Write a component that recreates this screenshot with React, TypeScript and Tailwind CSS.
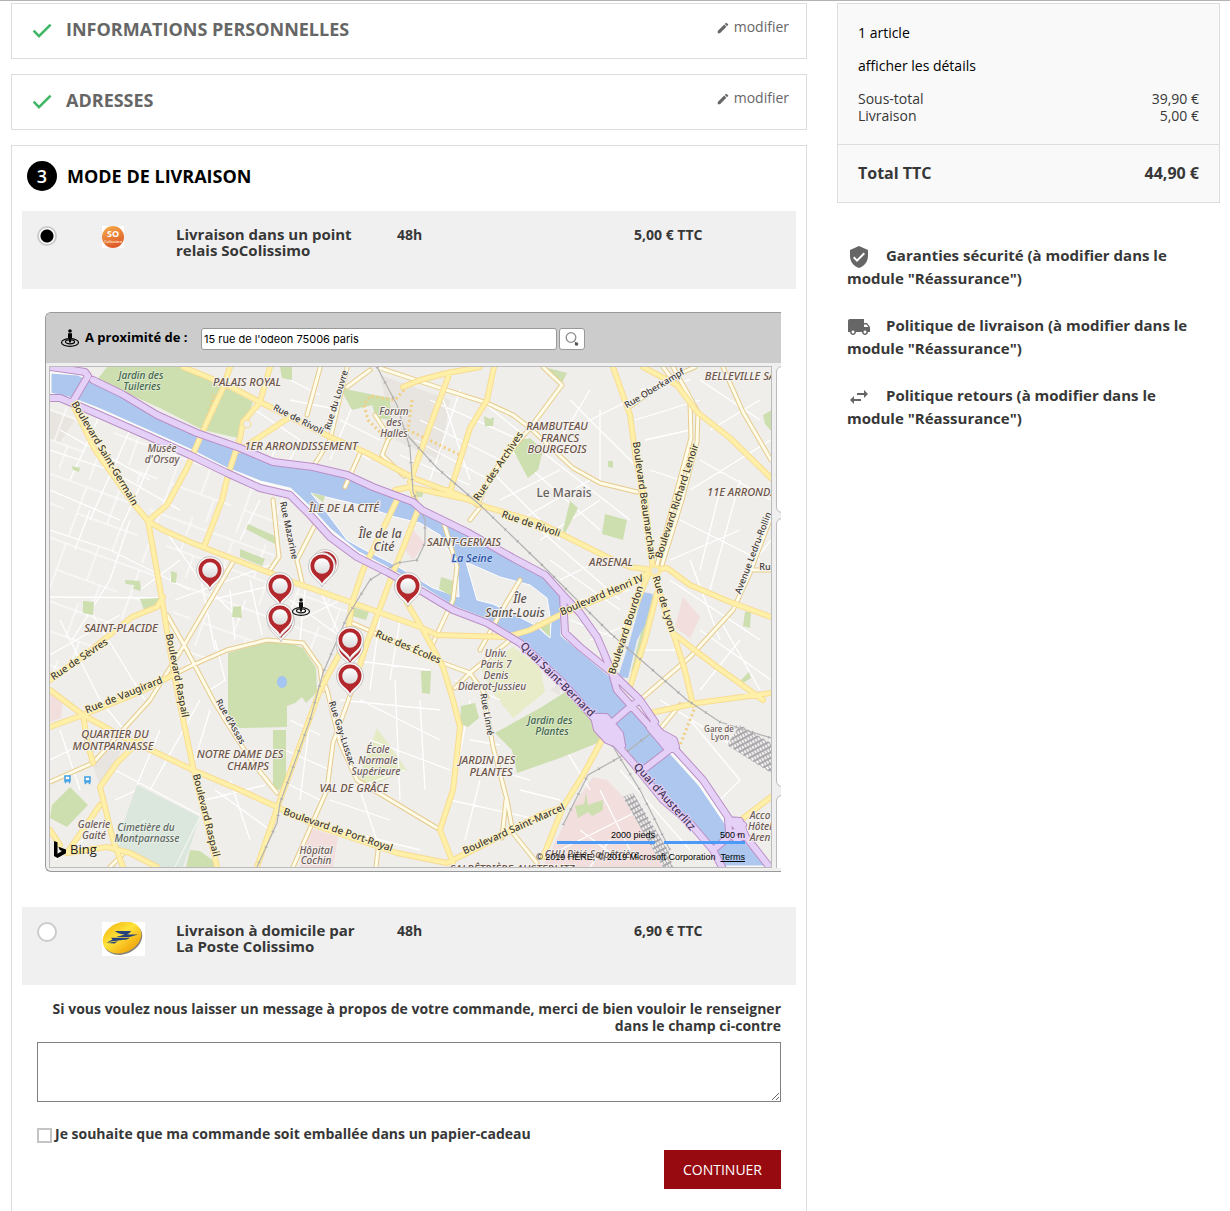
import React from "react";
import { MdEdit, MdLocalShipping, MdSwapHoriz, MdVerifiedUser } from "react-icons/md";

const GREENS = [
  "107,367 183,367 227,388 253,402 246,420 238,438 203,430 160,408 97,380",
  "228,653 267,642 290,643 303,648 316,668 317,692 306,703 302,697 295,703 287,706 287,727 240,728 228,722",
  "273,730 286,730 286,780 280,790 273,788",
  "495,733 540,708 567,691 598,722 600,742 560,758 517,773 512,750",
  "340,388 390,398 391,420 376,418 372,405 352,410",
  "530,438 543,450 538,470 528,478 514,452 520,440",
  "280,367 292,367 292,380 282,378",
  "70,787 88,805 67,827 50,818 52,805",
  "83,601 94,602 93,615 83,613",
  "140,599 160,598 160,603 145,613",
  "125,580 140,581 141,591 133,589 134,585 126,584",
  "171,571 177,573 176,583 171,582",
  "248,524 275,536 275,544 246,529",
  "240,549 265,559 262,566 240,557",
  "233,607 241,606 242,618 232,617",
  "605,514 627,520 623,540 602,534",
  "570,501 578,508 565,533 563,530",
  "484,416 490,419 494,417 493,426 485,426",
  "442,577 453,581 453,598 441,590",
  "421,671 431,671 430,694 422,693",
  "461,706 475,703 479,718 468,727 460,724",
  "72,466 80,468 79,472 73,470",
  "763,415 772,410 772,432 765,424",
  "353,607 369,612 366,620 352,616",
  "745,612 751,612 750,628 743,626",
  "741,680 749,672 751,678 740,685",
  "608,461 613,461 613,468 608,467",
  "190,850 200,851 215,862 215,867 186,867",
  "651,596 656,596 648,630 636,672 631,672 640,636",
  "548,368 567,373 562,383 555,380",
  "418,487 425,487 422,497 412,497",
  "586,793 588,805 603,800 603,810 592,816 588,812 578,818 575,806 584,804",
];
const PINKS = [
  "310,828 338,837 333,867 300,867",
  "593,777 607,780 623,797 663,867 543,867 573,806",
  "683,597 700,617 690,638 675,627",
  "413,530 425,543 421,550 413,560 405,550",
  "50,691 63,700 61,718 50,722",
];
const TINTS = [
  "380,375 450,400 440,460 395,440",
  "50,410 75,420 60,442 50,440",
  "425,560 445,575 440,588 422,570",
  "92,763 103,750 122,745 118,760 100,785",
  "550,690 560,683 560,695",
];
const MAJOR = [
  "M72 403 L95 450 L133 503 L148 521 L163 530 L190 542 L223 555 L270 573 L293 582 L353 603 L420 627 L437 635 L507 637",
  "M148 521 L155 560 L162 600 L170 650 L177 690 L193 767 L205 815 L217 867",
  "M183 367 L227 385 L260 402 L290 417 L330 437 L367 453 L413 478 L453 493 L480 505 L540 523 L567 537 L607 557 L630 567 L653 570 L667 568 L690 585 L730 602 L771 617",
  "M230 367 L223 388 L207 422 L200 438 L187 468 L167 505 L148 521",
  "M270 367 L260 402 L243 422 L240 438 L228 475 L222 500 L204 547",
  "M450 372 L423 445 L410 482 L418 510 L393 573 L367 643 L352 690",
  "M397 500 L363 570 L352 603 L347 640 L320 690 L280 800 L257 867",
  "M494 367 L487 400 L470 428 L460 460 L450 492",
  "M403 387 L420 380 L447 373 L480 367",
  "M613 367 L630 415 L636 460 L645 500 L653 570",
  "M643 367 L677 385 L697 412 L730 438 L771 478",
  "M653 570 L620 590 L560 615 L530 630 L507 637",
  "M653 570 L665 610 L673 633 L684 667 L693 705",
  "M673 633 L697 652 L717 667 L763 700",
  "M648 575 L632 615 L614 668",
  "M657 593 L645 640 L630 687",
  "M50 680 L85 655 L107 637 L132 617 L157 607 L163 597",
  "M50 727 L83 715 L140 692 L163 680 L177 673",
  "M50 690 L83 715 L123 737 L157 753 L193 770 L240 790 L277 807 L320 827 L397 853 L447 863 L467 853 L507 833 L540 815 L563 807 L583 775 L602 740",
  "M83 715 L88 745 L93 763",
  "M140 740 L117 763 L100 787 L107 815 L113 840 L123 867",
  "M100 805 L67 853 L107 847 L130 853 L157 867",
  "M407 603 L423 630 L443 667 L453 700 L460 727 L453 790 L440 830 L453 863",
  "M563 807 L543 857",
  "M650 713 L697 703 L771 693",
  "M737 823 L771 797",
  "M395 490 L410 487 L470 500 L447 490",
  "M240 450 L290 417",
  "M50 830 L60 845",
];
const CREAM = [
  "M380 368 L440 388 L487 403 L513 415 L530 428 L573 468 L600 483 L637 492",
  "M543 367 L562 385 L530 428 L493 472 L477 505",
  "M663 367 L690 402 L691 438 L673 505 L657 565",
  "M673 367 L698 412 L697 442 L682 500 L662 565",
  "M723 367 L743 412 L771 460",
  "M695 367 L670 378 L628 408",
  "M771 517 L750 573 L733 610 L690 657 L640 700",
  "M750 570 L771 570",
  "M233 562 L183 647 L150 700 L93 763 L50 782",
  "M167 615 L183 643 L213 700 L227 723 L253 763 L277 793",
  "M177 673 L193 665 L227 650 L267 640 L303 643 L320 667 L323 690",
  "M273 500 L279 557 L270 570",
  "M316 523 L297 560 L302 582",
  "M323 680 L327 690 L340 743 L357 780 L437 828",
  "M352 690 L333 743 L327 790 L293 867",
  "M483 690 L493 747 L507 800 L513 833 L537 863",
  "M506 800 L502 838",
  "M350 622 L440 662 L470 673 L487 697",
  "M510 640 L470 673 L455 688",
  "M320 368 L307 415",
  "M347 368 L330 440 L313 467",
  "M370 370 L347 387",
  "M443 520 L457 567 L453 600 L433 643",
  "M520 580 L505 605 L480 650",
  "M482 505 L470 520",
  "M388 440 L382 455 L404 476 M390 438 L375 415",
  "M360 453 L345 487",
  "M110 867 L125 852",
  "M378 850 L376 867",
  "M680 705 L655 735",
];
const DASHED = [
  "M404 390 L395 400 L370 396 L364 405 L368 420 L388 440 M412 400 L408 430 L460 455 M214 395 L206 422 M88 740 L92 762 M696 705 L680 745",
];
const PURPLE = [
  "M50 367 L72 370 L85 372 L88 376 L72 403",
  "M93 380 L122 394 L157 415 L197 433 L240 448 L273 462 L313 467 L347 475 L373 487 L413 502 L422 510 L467 532 L513 558 L545 575 L563 595 L565 633 L580 647 L612 673 L617 690 L653 730 L673 747 L703 780 L730 820 L743 833 L771 869",
  "M563 595 L580 613 L597 637 L604 653 L612 673 L640 700 L655 722",
  "M50 398 L60 398 L72 403 L100 415 L150 437 L190 455 L227 473 L260 488 L290 495 L310 515 L330 537 L357 557 L387 572 L423 592 L453 610 L487 623 L520 643 L563 683 L593 717 L610 737 L633 763 L663 800 L690 823 L713 850 L723 869",
  "M607 727 L630 707 L640 700",
  "M643 770 L673 747",
  "M600 717 L612 727 L622 745",
  "M713 850 L743 825",
  "M594 717 L606 717 L620 734 L622 746 L607 740 L597 729 Z M603 720 L617 741",
  "M653 724 L661 733 L674 740 L676 747 L666 747 L650 728 Z",
  "M728 820 L740 821 L745 835 L737 840 L729 831 Z",
];
const RAILS = [
  "M377 367 L397 405 L410 448 L413 492 L425 520 L425 543 L417 560 L397 563 L370 580 L347 617 L323 673 L310 720 L280 803 L277 823 L257 867",
  "M407 435 L437 468 L480 505 L540 563 L610 633 L687 700 L720 722 L771 738",
  "M563 825 L588 775 L620 757 L655 730",
  "M612 745 L640 790 L670 850",
];
const MINOR = [
  "M50 530 L110 550 L190 590 M90 510 L75 550 M130 520 L110 580 L72 640 M50 597 L165 598 M60 620 L100 700 M90 610 L145 700 M50 655 L120 615",
  "M165 530 L200 580 L240 620 M175 600 L270 565 M200 575 L215 650 M180 560 L140 590 M210 600 L275 585 M215 640 L225 680 L210 690",
  "M100 415 L70 480 M130 430 L90 520 M160 442 L120 530 M50 450 L110 470 L180 510 M60 430 L150 480 M50 490 L120 520",
  "M290 600 L345 640 M300 620 L340 600 M305 590 L300 640 M250 580 L262 635 M230 590 L235 640 M320 590 L350 660 M260 500 L240 540",
  "M350 660 L430 670 M380 615 L370 690 M400 620 L390 680 M340 700 L440 710 M360 700 L440 740 M395 680 L400 800 M420 700 L425 790 M370 740 L450 770 M405 770 L350 790",
  "M470 700 L455 780 M470 740 L500 745 M460 760 L530 780 M450 800 L540 820 M480 780 L465 840 M520 790 L560 800 M455 680 L500 700",
  "M290 720 L320 735 M285 750 L330 770 M280 780 L320 800 M310 720 L300 800 M360 790 L380 850 M330 800 L390 820 M340 830 L420 850",
  "M115 770 L200 815 M137 785 L160 730 M200 700 L150 790 M210 710 L195 760 M215 790 L270 830 M230 780 L250 840 M205 800 L265 785",
  "M430 400 L520 440 M420 420 L500 460 M415 440 L490 480 M440 390 L470 480 M460 390 L430 480 M400 455 L470 485 M480 400 L530 440",
  "M490 470 L560 540 M510 450 L600 530 M540 450 L630 520 M500 500 L560 470 M520 520 L590 480 M540 540 L600 500 M570 400 L640 470 M590 390 L560 440 M600 410 L600 480 M570 430 L630 400",
  "M640 390 L690 380 M635 420 L700 400 M645 440 L690 430 M650 470 L680 480 M700 380 L760 420 M710 430 L760 400 M700 460 L771 500 M690 490 L771 440 M680 520 L760 560 M720 490 L700 570 M740 480 L710 590",
  "M670 580 L760 640 M690 560 L720 640 M740 580 L771 540 M700 630 L771 680 M720 620 L760 690 M700 690 L740 640 M670 560 L740 530 M680 650 L640 650 M660 700 L771 770 M690 720 L740 780 L720 800",
  "M550 560 L620 610 M560 580 L600 560 M580 600 L630 590 M570 620 L620 640 M590 640 L640 620 M540 530 L620 600",
  "M330 505 L390 545 M345 500 L340 540 M370 508 L355 550 M330 520 L400 530 M425 535 L450 560 M480 575 L545 615 M490 570 L480 600 M530 585 L515 612",
  "M290 380 L320 395 M290 400 L340 410 M300 440 L290 460 M340 420 L380 440 M300 420 L370 460 M255 410 L300 440 M280 440 L270 460 M355 400 L330 460",
  "M60 730 L80 790 M50 760 L90 740 M55 860 L110 820 M115 800 L137 790 M100 700 L140 750",
  "M560 850 L640 810 M580 830 L620 860 M600 790 L630 850 M610 840 L590 867 M560 740 L590 790 M655 770 L700 800 M620 770 L690 850",
];
const SEINE =
  "M50 372 L78 374 L98 384 L122 396 L157 417 L197 435 L240 450 L273 464 L313 469 L347 477 L373 489 L413 504 L467 534 L513 560 L545 577 L562 597 L562 635 L580 650 L611 676 L630 707 L655 735 L700 785 L727 825 L745 840 L768 867 L724 867 L690 820 L663 796 L633 760 L612 733 L593 714 L563 680 L520 640 L487 620 L453 607 L423 588 L387 568 L357 552 L330 530 L310 508 L290 489 L260 482 L227 469 L190 450 L150 432 L100 410 L72 399 L50 394 Z";
const BLOCKS = [
  "M50 405 L72 407 L148 525 L160 597 L50 676 Z",
  "M165 535 L292 585 L350 605 L320 665 L267 640 L180 670 Z",
  "M110 425 L290 500 L270 570 L155 522 Z",
];

type Label = [string, number, number, number?];
const AREAS: Label[] = [
  ["PALAIS ROYAL", 247, 386], ["1ER ARRONDISSEMENT", 301, 450], ["RAMBUTEAU", 557, 430], ["FRANCS", 560, 442],
  ["BOURGEOIS", 557, 453], ["BELLEVILLE SA", 740, 380], ["11E ARROND.", 740, 496], ["ÎLE DE LA CITÉ", 344, 512],
  ["SAINT-GERVAIS", 464, 546], ["ARSENAL", 611, 566], ["SAINT-PLACIDE", 121, 632], ["QUARTIER DU", 115, 738],
  ["MONTPARNASSE", 113, 750], ["NOTRE DAME DES", 240, 758], ["CHAMPS", 248, 770], ["VAL DE GRÂCE", 354, 792],
  ["JARDIN DES", 487, 764], ["PLANTES", 491, 776], ["SALPÊTRIÈRE-AUSTERLITZ", 512, 873],
];
const PLACES: Label[] = [
  ["Musée", 162, 452], ["d'Orsay", 162, 463], ["Forum", 394, 415], ["des", 394, 426], ["Halles", 394, 437],
  ["Univ.", 496, 657], ["Paris 7", 496, 668], ["Denis", 496, 679], ["Diderot-Jussieu", 492, 690],
  ["École", 378, 753], ["Normale", 378, 764], ["Supérieure", 376, 775], ["Hôpital", 316, 854], ["Cochin", 316, 864],
  ["Galerie", 94, 828], ["Gaité", 94, 839], ["Acco", 760, 819], ["Hôtel", 760, 830], ["Aren", 760, 841],
  ["CHU Pitié-Salpêtrière", 592, 858],
];
const PARKS: Label[] = [
  ["Jardin des", 141, 379], ["Tuileries", 142, 390], ["Jardin des", 550, 724], ["Plantes", 552, 735],
];
const STREETS: Label[] = [
  ["Boulevard Saint-Germain", 102, 455, 59],
  ["Rue des Archives", 501, 468, -56], ["Boulevard Beaumarchais", 641, 501, 82],
  ["Boulevard Richard Lenoir", 680, 502, -72], ["Rue de Rivoli", 530, 527, 19], ["Boulevard Henri IV", 603, 598, -23],
  ["Boulevard Bourdon", 629, 631, -72], ["Rue de Lyon", 661, 605, 73],
  ["Rue de Sèvres", 81, 662, -34], ["Rue de Vaugirard", 125, 698, -22], ["Boulevard Raspail", 174, 676, 79],
  ["Boulevard Raspail", 203, 816, 76], ["Rue des Écoles", 407, 650, 23], ["Boulevard de Port-Royal", 337, 833, 19],
  ["Boulevard Saint-Marcel", 515, 832, -24],
];
const SMALL_STREETS: Label[] = [
  ["Rue Mazarine", 286, 531, 78], ["Rue d'Assas", 228, 723, 60], ["Rue Gay-Lussac", 339, 734, 72], ["Rue Linné", 484, 715, 80],
  ["Rue du Louvre", 339, 401, -73], ["Rue de Rivoli", 297, 422, 27], ["Rue Oberkampf", 656, 391, -31],
  ["Avenue Ledru-Rollin", 756, 554, -69],
];
const QUAYS: Label[] = [
  ["Quai Saint-Bernard", 555, 682, 45], ["Quai d'Austerlitz", 662, 799, 48],
];
const PINS = [
  [325, 563], [210, 570], [280, 586], [281, 621], [280, 617], [322, 566], [408, 586], [350, 646], [350, 640], [350, 676],
];

function MapLabels({ items, className, halo = "#f4f2ef" }: { items: Label[]; className: string; halo?: string }) {
  return (
    <g textAnchor="middle" stroke={halo} strokeWidth={2} paintOrder="stroke" strokeLinejoin="round" className={className}>
      {items.map(([text, x, y, angle]) => (
        <text key={text + x} x={x} y={y} transform={angle ? `rotate(${angle} ${x} ${y})` : undefined}>
          {text}
        </text>
      ))}
    </g>
  );
}

function Roads({ paths, edge, fill, width }: { paths: string[]; edge: string; fill: string; width: number }) {
  const d = paths.join(" ");
  return (
    <g fill="none" strokeLinejoin="round" strokeLinecap="round">
      <path d={d} stroke={edge} strokeWidth={width + 2} />
      <path d={d} stroke={fill} strokeWidth={width} />
    </g>
  );
}

function Locator() {
  return (
    <>
      <ellipse cx="10" cy="13.5" rx="8.5" ry="3.8" fill="none" stroke="currentColor" strokeWidth="1.2" />
      <ellipse cx="10" cy="12.8" rx="4.6" ry="2" fill="none" stroke="currentColor" strokeWidth="1.2" />
      <circle cx="10" cy="2" r="1.8" />
      <path d="M8 4.2h4v5h-1v4.3H9V9.200H8z" />
    </>
  );
}

function CityMap() {
  return (
    <svg viewBox="50 367 721 500" preserveAspectRatio="xMinYMin slice" className="block h-[500px] w-full font-['Noto_Sans'] font-medium" role="img" aria-label="Carte des points relais">
      <defs>
        <pattern id="blocks" width="78" height="60" patternUnits="userSpaceOnUse" patternTransform="rotate(20)">
          <path d="M0 8H78M14 8V60M46 0V36M14 36H78M60 36V60" stroke="#fff" strokeWidth="1.1" fill="none" />
        </pattern>
        <pattern id="tracks" width="3" height="5" patternUnits="userSpaceOnUse" patternTransform="rotate(-28)">
          <path d="M0 0V5M0 1H3" stroke="#aaa8ad" strokeWidth="1.8" />
        </pattern>
        <linearGradient id="pinHead" x1="0" y1="0" x2="0" y2="1">
          <stop offset="0" stopColor="#fff" />
          <stop offset="1" stopColor="#dadada" />
        </linearGradient>
      </defs>
      <rect x="50" y="367" width="2000" height="500" fill="#efeeeb" />
      {TINTS.map((p) => <polygon key={p} points={p} fill="#e8e4df" />)}
      {BLOCKS.map((d) => <path key={d} d={d} fill="url(#blocks)" />)}
      {PINKS.map((p) => <polygon key={p} points={p} fill="#f1dedd" />)}
      <polygon points="480,667 513,647 540,667 545,692 513,718 493,693" fill="#e8ecc9" />
      <polygon points="377,728 407,770 380,782 357,782" fill="#e4ebc5" />
      <path d={MINOR.join(" ")} stroke="#fff" strokeWidth="1.3" fill="none" />
      {GREENS.map((p) => <polygon key={p} points={p} fill="#cddeaf" />)}
      <polygon points="137,785 200,817 183,867 157,867 115,847" fill="#dbe7dc" />
      <path d="M200 817L175 867M115 847L145 820" stroke="#f3f6f2" strokeWidth="1.2" />
      <path d={SEINE} fill="#adc7ef" stroke="#fbfbf8" strokeWidth="3" />
      <polygon points="643,592 653,594 645,625 637,640 628,678 618,677 630,640" fill="#adc7ef" />
      <ellipse cx="282" cy="682" rx="5" ry="6" fill="#a4c4f2" />
      <path d="M311 493L330 498L360 505L395 517L420 523L440 535L450 553L458 577L459 597L433 588L397 566L363 549L347 540L330 517Z" fill="#efeeeb" stroke="#fff" />
      <path d="M466 562L500 577L530 585L547 598L551 622L550 638L535 625L493 604L477 600Z" fill="#efeeeb" stroke="#fff" />
      <path d="M311 493l14 3-2 6z M441 577l12 4v16l-14-8z M535 623l15-3v17z" fill="#cddeaf" />
      <polygon points="413,530 425,543 413,560 405,550" fill="#f1dedd" />
      <polygon points="740,725 771,743 771,773 727,745" fill="url(#tracks)" />
      <polygon points="623,797 633,793 668,850 673,867 663,867" fill="url(#tracks)" />
      <Roads paths={CREAM} edge="#e6cb8e" fill="#fffce9" width={3} />
      <path d={DASHED.join(" ")} stroke="#f0cf80" strokeWidth="3" strokeDasharray="2 3" fill="none" />
      <Roads paths={MAJOR} edge="#f8dc92" fill="#fef0a8" width={4} />
      <path d={RAILS.join(" ")} stroke="#b2b2b2" strokeWidth="1.2" fill="none" />
      <path d={RAILS.join(" ")} stroke="#a9a9ad" strokeWidth="3" strokeDasharray="1 16" fill="none" />
      <Roads paths={PURPLE} edge="#ba8fc6" fill="#e5d0f7" width={6} />
      <circle cx="655" cy="571" r="5" fill="#e9e6da" stroke="#fee99c" strokeWidth="3" />
      <circle cx="247" cy="424" r="4" fill="#efeeeb" stroke="#f8dc92" />
      <g fill="none" stroke="#3d9fe4" strokeWidth="1.500">
        <path d="M65 776h5v5h-5zM85 777h5v5h-5z" fill="#fff" />
        <path d="M65 780h5M85 781h5M65 783l1-1M70 783l-1-1M85 784l1-1M90 784l-1-1" />
      </g>
      <MapLabels items={STREETS} className="fill-[#3f3a36] text-[10px]" halo="#fcf3c6" />
      <MapLabels items={SMALL_STREETS} className="fill-[#3f3a36] text-[9px]" />
      <MapLabels items={QUAYS} className="fill-[#47375a] text-[11px]" halo="#e5d0f7" />
      <MapLabels items={PLACES} className="fill-[#6d5c58] text-[10px] italic" />
      <MapLabels items={AREAS} className="fill-[#6d5549] text-[11px] italic" />
      <MapLabels items={PARKS} className="fill-[#446653] text-[10px] italic" halo="#dbe8c5" />
      <MapLabels items={[["Cimetière du", 146, 831], ["Montparnasse", 147, 842]]} className="fill-[#5d6662] text-[10px] italic" halo="#e6efe6" />
      <MapLabels items={[["Île de la", 380, 538], ["Cité", 384, 551], ["Île", 520, 603], ["Saint-Louis", 515, 617]]} className="fill-[#5b514e] text-[12px] italic" />
      <MapLabels items={[["La Seine", 472, 562]]} className="fill-[#2a51a3] text-[11px] italic" halo="#bfd3f1" />
      <MapLabels items={[["Le Marais", 564, 497]]} className="fill-[#66605d] text-[12px]" />
      <MapLabels items={[["Gare de", 719, 732], ["Lyon", 720, 740]]} className="fill-[#6d5c58] text-[8px]" />
      <MapLabels items={[["Ru", 765, 570]]} className="fill-[#3f3a36] text-[9px]" />
      {PINS.map(([x, y]) => (
        <g key={`${x}-${y}`} transform={`translate(${x} ${y})`}>
          <path d="M0 21C-2 15-13.500 11-13.500 0A13.500 13.500 0 0 1 13.500 0C13.500 11 2 15 0 21Z" fill="#fafafa" stroke="#bdb9b9" strokeWidth=".8" />
          <path d="M0 17.500C-2 12-11.500 9.500-11.500 0A11.500 11.500 0 0 1 11.500 0C11.500 9.500 2 12 0 17.500Z" fill="#b3282d" />
          <circle r="7.800" fill="url(#pinHead)" />
        </g>
      ))}
      <g transform="translate(291 598)" fill="#111" className="text-[#111]"><Locator /></g>
    </svg>
  );
}

function RelayPicker() {
  return (
    <div className="ml-[23px] overflow-hidden rounded-l-[6px] border border-r-0 border-[#999] bg-[#efefef]">
      <div className="flex h-[50px] items-center bg-[#ccc] pl-[14px] text-black">
        <svg viewBox="0 0 20 19" className="h-[19px] w-5" fill="currentColor" aria-hidden="true"><Locator /></svg>
        <label htmlFor="near" className="ml-[5px] w-[116px] text-[13px] font-bold">A proximité de :</label>
        <input id="near" type="text" defaultValue="15 rue de l'odeon 75006 paris" className="mt-[2px] h-[22px] w-[356px] rounded-[3px] border border-[#999] bg-white px-[2px] font-[Inter] text-[11px]" />
        <button type="button" aria-label="Rechercher" className="mt-[2px] ml-[2px] flex h-[22px] w-[26px] items-center justify-center rounded-[3px] border border-[#999] bg-white">
          <svg viewBox="0 0 14 14" className="size-[14px]" fill="none" aria-hidden="true">
            <circle cx="6" cy="5.500" r="4.800" stroke="#8c8c8c" strokeWidth="1.300" />
            <path d="M9.500 9.500l1.500 1.500" stroke="#666" />
            <circle cx="11.500" cy="12" r="1.800" fill="#555" />
          </svg>
        </button>
      </div>
      <div className="flex pt-[3px] pb-[3px] pl-[3px]">
        <div className="relative min-w-0 flex-1 border border-[#bbb]">
          <CityMap />
          <div className="absolute bottom-[8px] left-[4px] flex items-center gap-1 text-[#222]">
            <svg viewBox="0 0 12 17" className="h-[17px] w-3" aria-hidden="true"><path d="M0 0l3.500 1.200v11.500L8 10.100 5.800 9.100 4.400 5.700l7.600 2.700v3.900L3.500 17 0 15z" fill="#000" /></svg>
            <span className="text-[13px]">Bing</span>
          </div>
          <div className="absolute right-[26px] bottom-[23px] flex gap-[9px] text-right font-['Liberation_Sans'] text-[9px] leading-3 text-black">
            <div className="w-[98px] border-b-3 border-[#4b9af8]">2000 pieds</div>
            <div className="w-[81px] border-b-3 border-[#4b9af8]">500 m</div>
          </div>
          <div className="absolute right-[26px] bottom-[4px] flex gap-[5px] font-['Liberation_Sans'] text-[9px] leading-3 whitespace-nowrap text-black">
            <span>© 2019 HERE, © 2019 Microsoft Corporation</span>
            <a href="#terms" className="underline">Terms</a>
          </div>
        </div>
        <div className="ml-[4px] flex w-[5px] shrink-0 flex-col overflow-hidden">
          <div className="h-[147px] w-10 rounded-l-[6px] border border-[#bbb] bg-white" />
          <div className="mt-[5px] h-[269px] w-10 rounded-l-[6px] border border-[#bbb] bg-white" />
          <div className="mt-[8px] w-10 flex-1 rounded-tl-[6px] border border-b-0 border-[#bbb] bg-white" />
        </div>
      </div>
    </div>
  );
}

function SoLogo() {
  return (
    <svg viewBox="0 0 22 22" className="size-[22px]" role="img" aria-label="SoColissimo">
      <defs><linearGradient id="so" x1="0" y1="0" x2=".4" y2="1"><stop offset="0" stopColor="#f7b04a" /><stop offset="1" stopColor="#de5b2b" /></linearGradient></defs>
      <rect width="22" height="22" fill="#fff" />
      <circle cx="11" cy="11" r="11" fill="url(#so)" />
      <text x="11" y="11" textAnchor="middle" fill="#fff" className="font-['Open_Sans'] text-[9px] font-bold">SO</text>
      <text x="11" y="17" textAnchor="middle" fill="#ffd9b8" className="font-['Open_Sans'] text-[4px] italic">Colissimo</text>
    </svg>
  );
}

function PosteLogo() {
  return (
    <svg viewBox="0 0 43 34" className="h-[34px] w-[43px]" role="img" aria-label="La Poste">
      <defs><linearGradient id="poste" x1="0" y1="0" x2=".3" y2="1"><stop offset="0" stopColor="#f3b915" /><stop offset=".5" stopColor="#ffe33a" /><stop offset="1" stopColor="#f2b013" /></linearGradient></defs>
      <rect width="43" height="34" fill="#fff" />
      <ellipse cx="21" cy="17" rx="20" ry="15" transform="rotate(-24 21 17)" fill="#8a8578" />
      <ellipse cx="20" cy="15.500" rx="20" ry="15" transform="rotate(-24 20 15.500)" fill="url(#poste)" />
      <path d="M13 9h16c-1 1.800-2 2.600-4 3.400L36 12.600 27.500 15H14l9-2.500c-4 0-8-1.300-10-3.500z M9 15.800h18.500c-1 1.500-3 2-5.500 2L9 19.500 4 21l6.500-3.400z M5 21l11-1.700-3.500 2.200z" fill="#27417f" />
    </svg>
  );
}

function Option({ id, checked, logo, name, delay, price }: { id: string; checked?: boolean; logo: React.ReactNode; name: string; delay: string; price: string }) {
  return (
    <div className="grid h-[78px] grid-cols-[65px_74px_minmax(0,221fr)_minmax(0,237fr)_minmax(0,147fr)] items-start bg-[#f0f0f0] p-[15px] text-sm leading-[17px] font-bold">
      <input id={id} type="radio" name="delivery" defaultChecked={checked} className="size-5 appearance-none rounded-full border-2 border-[#ccc] bg-white checked:bg-[radial-gradient(circle,#000_6px,#fff_7px)]" />
      {logo}
      <label htmlFor={id} className="max-w-48 text-[15px] leading-4">{name}</label>
      <span>{delay}</span>
      <span>{price}</span>
    </div>
  );
}

function DoneStep({ title }: { title: string }) {
  return (
    <section className="mb-[15px] flex h-14 justify-between border border-[#ddd] pr-[17px] pl-[18px] text-[#666]">
      <h1 className="flex h-[50px] items-center text-lg font-bold">
        <svg viewBox="0 0 24 24" className="mt-1 mr-3 size-6" fill="none" stroke="#3fb766" strokeWidth="2.600" aria-hidden="true">
          <path d="M3.600 11.700L9 17.100L20.600 5.600" />
        </svg>
        {title}
      </h1>
      <a href="#modifier" className="flex h-[46px] items-center text-sm">
        <MdEdit className="mt-[2px] mr-1 size-[14px]" />
        modifier
      </a>
    </section>
  );
}

const REASSURANCE = [
  { Icon: MdVerifiedUser, text: "Garanties sécurité (à modifier dans le module \"Réassurance\")" },
  { Icon: MdLocalShipping, text: "Politique de livraison (à modifier dans le module \"Réassurance\")" },
  { Icon: MdSwapHoriz, text: "Politique retours (à modifier dans le module \"Réassurance\")" },
];

export default function App() {
  return (
    <div className="flex items-start gap-[30px] border-t border-[#b3b3b3] pt-[2px] pr-[10px] pl-[11px] font-['Open_Sans',sans-serif] text-[#373737]">
      <main className="min-w-0 flex-1">
        <DoneStep title="INFORMATIONS PERSONNELLES" />
        <DoneStep title="ADRESSES" />
        <section className="border border-[#ddd] px-[10px] pt-[15px] pb-12">
          <h1 className="mb-5 ml-[5px] flex items-center gap-[10px] text-lg leading-[30px] font-bold text-black">
            <span className="flex size-[30px] items-center justify-center rounded-full bg-black font-semibold text-white">3</span>
            MODE DE LIVRAISON
          </h1>
          <form>
            <Option id="relay" checked logo={<SoLogo />} name="Livraison dans un point relais SoColissimo" delay="48h" price="5,00 € TTC" />
            <div className="mt-[23px] mr-[15px] mb-[35px]"><RelayPicker /></div>
            <Option id="home" logo={<PosteLogo />} name="Livraison à domicile par La Poste Colissimo" delay="48h" price="6,90 € TTC" />
            <div className="flex flex-col px-[15px] pt-[15px] text-sm leading-[17px] font-bold">
              <label htmlFor="message" className="text-right">
                Si vous voulez nous laisser un message à propos de votre commande, merci de bien vouloir le renseigner dans le champ ci-contre
              </label>
              <textarea id="message" className="mt-2 h-[60px] w-full border border-[#808080] bg-white p-1 font-normal" />
              <div className="mt-[23px] flex items-start gap-[3px]">
                <input id="gift" type="checkbox" className="mt-[3px] size-[15px] appearance-none border-2 border-[#c4c4c4] bg-white checked:bg-black" />
                <label htmlFor="gift">Je souhaite que ma commande soit emballée dans un papier-cadeau</label>
              </div>
              <button type="button" className="mt-[7px] h-[39px] w-[117px] self-end bg-[#970b10] font-normal text-white">CONTINUER</button>
            </div>
          </form>
        </section>
      </main>
      <aside className="w-[383px] shrink-0">
        <section className="border border-[#ddd] bg-[#f9f9f9] text-sm leading-[17px]">
          <div className="border-b border-[#ddd] px-5 py-5">
            <p className="mb-4 text-black">1 article</p>
            <a href="#details" className="mb-4 block text-black">afficher les détails</a>
            <div className="flex justify-between"><span>Sous-total</span><span>39,90 €</span></div>
            <div className="flex justify-between"><span>Livraison</span><span>5,00 €</span></div>
          </div>
          <div className="flex h-[57px] items-center justify-between px-5 pb-[2px] text-base font-bold"><span>Total TTC</span><span>44,90 €</span></div>
        </section>
        <ul className="mt-[41px] space-y-6 pr-6 pl-[10px] text-[15px] leading-[23px] font-bold">
          {REASSURANCE.map(({ Icon, text }) => (
            <li key={text}>
              <Icon className="-mt-[3px] -mb-1 mr-[15px] inline size-6 align-middle text-[#666]" />
              {text}
            </li>
          ))}
        </ul>
      </aside>
    </div>
  );
}
